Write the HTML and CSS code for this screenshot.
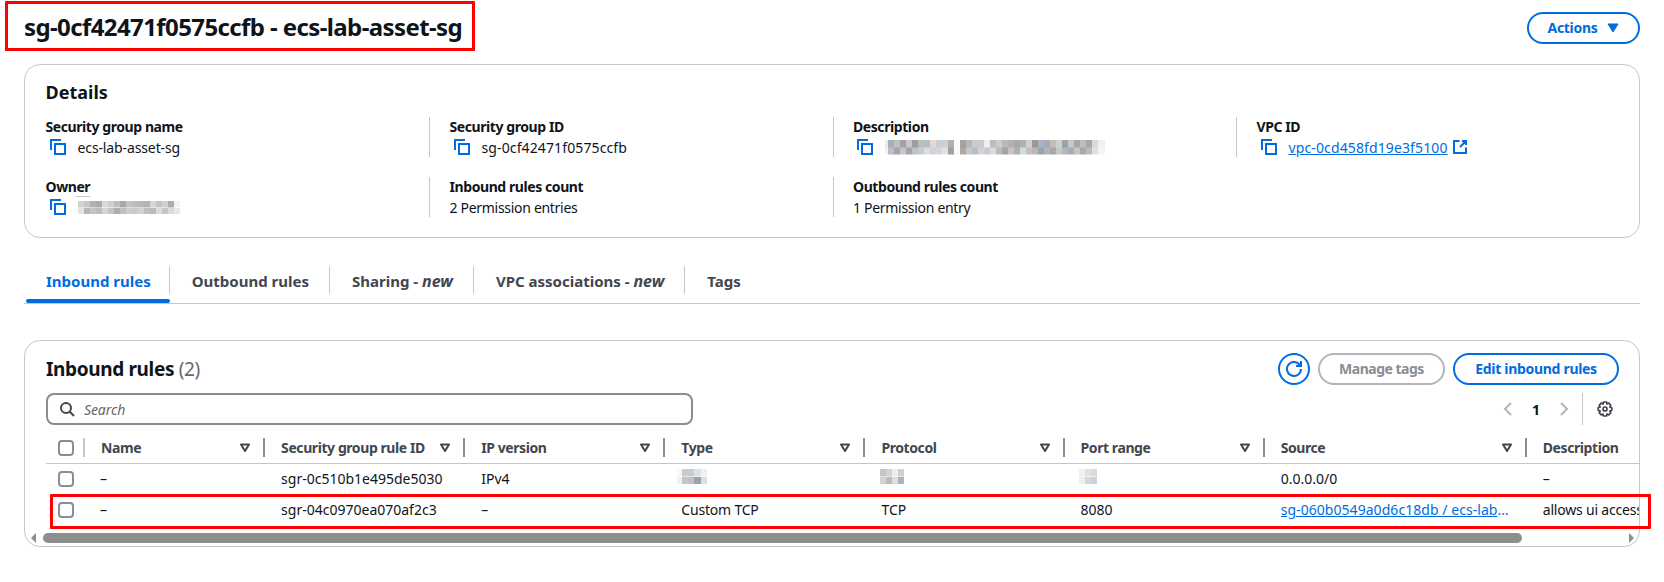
FILE: index.html
```html
<!DOCTYPE html>
<html lang="en">
<head>
<meta charset="utf-8">
<title>sg-0cf42471f0575ccfb - ecs-lab-asset-sg</title>
<link rel="stylesheet" href="styles.css">
</head>
<body>
<svg class="defs" width="0" height="0" aria-hidden="true">
  <symbol id="copy" viewBox="0 0 16 16"><path d="M1 11V1h10" fill="none" stroke="currentColor" stroke-width="2"/><rect x="5" y="5" width="10" height="10" fill="none" stroke="currentColor" stroke-width="2"/></symbol>
  <symbol id="sort" viewBox="0 0 12 10"><path d="M2 1.500h8L6 8z" fill="none" stroke="currentColor" stroke-width="2" stroke-linejoin="round"/></symbol>
</svg>
<main class="page">
  <header class="page-head">
    <h1 class="title">sg-0cf42471f0575ccfb - ecs-lab-asset-sg</h1>
    <button class="btn btn-actions">Actions<svg class="caret" viewBox="0 0 12 10" width="12" height="10"><path d="M1 1h10L6 9z" fill="currentColor" stroke="currentColor" stroke-linejoin="round"/></svg></button>
  </header>

  <section class="card details">
    <h2 class="details-title">Details</h2>
    <div class="details-grid">
      <div class="kv"><div class="k">Security group name</div><div class="v"><svg class="copy"><use href="#copy"/></svg>ecs-lab-asset-sg</div></div>
      <div class="kv sep"><div class="k">Security group ID</div><div class="v id"><svg class="copy"><use href="#copy"/></svg>sg-0cf42471f0575ccfb</div></div>
      <div class="kv sep"><div class="k">Description</div><div class="v"><svg class="copy"><use href="#copy"/></svg><span class="mosaic mosaic-desc"></span></div></div>
      <div class="kv sep"><div class="k">VPC ID</div><div class="v id"><svg class="copy"><use href="#copy"/></svg><a class="link" href="#">vpc-0cd458fd19e3f5100</a><svg class="ext" viewBox="0 0 16 16" width="16" height="16"><path d="M14 8.500V14H2V2h5.500M10 2h4v4M14 2 8 8" fill="none" stroke="currentColor" stroke-width="2"/></svg></div></div>
      <div class="kv"><div class="k">Own<span class="mark">er</span></div><div class="v"><svg class="copy"><use href="#copy"/></svg><span class="mosaic mosaic-owner"></span></div></div>
      <div class="kv sep"><div class="k">Inbound rules count</div><div class="v plain">2 Permission entries</div></div>
      <div class="kv sep"><div class="k">Outbound rules count</div><div class="v plain">1 Permission entry</div></div>
    </div>
  </section>

  <nav class="tabs">
    <a class="tab tab-first active" href="#">Inbound rules</a>
    <a class="tab" href="#">Outbound rules</a>
    <a class="tab" href="#">Sharing - <em>new</em></a>
    <a class="tab" href="#">VPC associations - <em>new</em></a>
    <a class="tab tab-last" href="#">Tags</a>
  </nav>

  <section class="card rules">
    <div class="rules-head">
      <h2 class="rules-title">Inbound rules <span class="count">(2)</span></h2>
      <div class="rules-actions">
        <button class="btn btn-icon" aria-label="Refresh"><svg viewBox="0 0 16 16" width="16" height="16"><path d="M10 5h5V0M15 8a7 7 0 1 1-.9-3.450" fill="none" stroke="currentColor" stroke-width="2"/></svg></button>
        <button class="btn btn-disabled">Manage tags</button>
        <button class="btn btn-edit">Edit inbound rules</button>
      </div>
    </div>
    <div class="filter-row">
      <div class="search">
        <svg viewBox="0 0 16 16" width="16" height="16"><circle cx="7" cy="7" r="5" fill="none" stroke="currentColor" stroke-width="2"/><path d="m15 15-4.500-4.500" fill="none" stroke="currentColor" stroke-width="2"/></svg>
        <span class="placeholder">Search</span>
      </div>
      <div class="pager">
        <svg class="chev" viewBox="0 0 16 16" width="16" height="16"><path d="M11 2 5 8l6 6" fill="none" stroke="currentColor" stroke-width="2"/></svg>
        <span class="page-num">1</span>
        <svg class="chev" viewBox="0 0 16 16" width="16" height="16"><path d="m5 2 6 6-6 6" fill="none" stroke="currentColor" stroke-width="2"/></svg>
        <span class="pager-div"><svg class="gear" viewBox="0 0 16 16" width="16" height="16"><path d="M6.500 1h3l.5 2 1.800-.9 2 2.200-1 1.700 2 .7v2.600l-2 .7 1 1.700-2 2.200-1.800-.9-.5 2h-3l-.5-2-1.800.9-2-2.200 1-1.700-2-.7V6.700l2-.7-1-1.700 2-2.200 1.800.9z" fill="none" stroke="currentColor" stroke-width="1.700" stroke-linejoin="round"/><circle cx="8" cy="8" r="2" fill="none" stroke="currentColor" stroke-width="1.700"/></svg></span>
      </div>
    </div>
    <div class="table-wrap">
      <table class="table">
        <colgroup><col class="c-sel"><col class="c-name"><col class="c-std"><col class="c-std"><col class="c-std"><col class="c-proto"><col class="c-std"><col class="c-src"><col class="c-std"></colgroup>
        <thead>
          <tr>
            <th><div class="th-in th-sel"><input class="check" type="checkbox"></div></th>
            <th><div class="th-in th-first">Name<svg class="sort"><use href="#sort"/></svg></div></th>
            <th><div class="th-in">Security group rule ID<svg class="sort"><use href="#sort"/></svg></div></th>
            <th><div class="th-in">IP version<svg class="sort"><use href="#sort"/></svg></div></th>
            <th><div class="th-in">Type<svg class="sort"><use href="#sort"/></svg></div></th>
            <th><div class="th-in">Protocol<svg class="sort"><use href="#sort"/></svg></div></th>
            <th><div class="th-in">Port range<svg class="sort"><use href="#sort"/></svg></div></th>
            <th><div class="th-in">Source<svg class="sort"><use href="#sort"/></svg></div></th>
            <th><div class="th-in th-end">Description</div></th>
          </tr>
        </thead>
        <tbody>
          <tr>
            <td class="td-sel"><input class="check" type="checkbox"></td>
            <td class="td-first">–</td>
            <td>sgr-0c510b1e495de5030</td>
            <td>IPv4</td>
            <td><span class="mosaic mosaic-type"></span></td>
            <td><span class="mosaic mosaic-proto"></span></td>
            <td><span class="mosaic mosaic-port"></span></td>
            <td>0.0.0.0/0</td>
            <td>–</td>
          </tr>
          <tr>
            <td class="td-sel"><input class="check" type="checkbox"></td>
            <td class="td-first">–</td>
            <td>sgr-04c0970ea070af2c3</td>
            <td>–</td>
            <td class="td-tight">Custom TCP</td>
            <td>TCP</td>
            <td>8080</td>
            <td class="td-src"><a class="link src-link" href="#">sg-060b0549a0d6c18db / ecs-lab-ui-sg</a></td>
            <td class="td-tight">allows ui access</td>
          </tr>
        </tbody>
      </table>
    </div>
    <div class="scrollbar">
      <span class="arrow arrow-left"></span>
      <span class="thumb"></span>
      <span class="arrow arrow-right"></span>
    </div>
  </section>
</main>
<div class="red-box red-title"></div>
<div class="red-box red-row"></div>
</body>
</html>
```

FILE: styles.css
```css
* { box-sizing: border-box; }
html, body { margin: 0; padding: 0; background: #fff; }
body {
  position: relative;
  width: 1664px;
  height: 582px;
  overflow: hidden;
  font-family: "Noto Sans", "Liberation Sans", sans-serif;
  font-size: 14px;
  color: #0f141a;
}
.defs { position: absolute; }
.page { padding: 0 24px; }

.page-head {
  display: flex;
  align-items: center;
  justify-content: space-between;
  height: 56px;
  margin-bottom: 8px;
}
.title { margin: 0 0 2px; font-size: 24px; line-height: 30px; font-weight: 700; letter-spacing: -0.6px; }

.btn {
  display: inline-flex;
  align-items: center;
  justify-content: center;
  height: 32px;
  border: 2px solid #006ce0;
  border-radius: 16px;
  background: #fff;
  color: #006ce0;
  font: 700 14px/20px "Noto Sans", sans-serif;
  letter-spacing: -0.3px;
  padding: 0;
}
.btn-actions { width: 113px; gap: 10px; }
.btn-icon { width: 32px; }
.btn-disabled { width: 127px; border-color: #b4b4bb; color: #8c8c94; letter-spacing: -0.5px; }
.btn-edit { width: 166px; }

.card { border: 1px solid #c6c6cd; border-radius: 16px; background: #fff; }
.details { height: 174px; padding: 15px 0 0 20.5px; }
.details-title { margin: 0; font-size: 18px; line-height: 24px; font-weight: 700; }
.details-grid {
  display: grid;
  grid-template-columns: 383.5px repeat(3, 403.5px);
  grid-auto-rows: 40px;
  row-gap: 20px;
  margin-top: 13px;
}
.kv.sep { border-left: 1px solid #c6c6cd; padding-left: 19.5px; }
.k { font-weight: 700; line-height: 20px; white-space: nowrap; letter-spacing: -0.42px; }
.mark { border-bottom: 1px solid #c6c6cd; }
.v { display: flex; align-items: center; height: 20px; white-space: nowrap; letter-spacing: -0.12px; }
.v.id { letter-spacing: 0.12px; }
.v.plain { letter-spacing: -0.3px; }
.copy { width: 16px; height: 16px; margin: 0 12px 0 4px; color: #006ce0; flex: none; }
.ext { margin-left: 4px; color: #006ce0; }
.link { color: #006ce0; text-decoration: underline; }

.mosaic { display: inline-block; background-repeat: no-repeat; background-size: 100% 50%; background-position: top, bottom; }
.mosaic-owner {
  width: 102px; height: 13px; margin-top: 1px;
  background-image:
    linear-gradient(90deg, #d8d0cc 0 6px, #c6c6ca 6px 12px, #b0afb2 12px 18px, #aaa9b0 18px 24px, #ddd9d9 24px 30px, #ccd2cd 30px 36px, #bbbfc5 36px 42px, #aaa8ae 42px 48px, #c0c3c0 48px 54px, #b9bdc0 54px 60px, #b6babf 60px 66px, #b2b3b5 66px 72px, #d6d5d5 72px 78px, #c2c4ca 78px 84px, #cfd0d2 84px 90px, #aeadae 90px 96px, #f0f3f6 96px 102px),
    linear-gradient(90deg, #e6e2df 0 6px, #b8b6b8 6px 12px, #c6c4c5 12px 18px, #bcbcc2 18px 24px, #d6d4d4 24px 30px, #c0c6c4 30px 36px, #aab0b6 36px 42px, #c2c0c4 42px 48px, #cccdcc 48px 54px, #c8cacd 54px 60px, #d0d3d6 60px 66px, #c0c0c2 66px 72px, #b8bcc0 72px 78px, #dcdde0 78px 84px, #c4c6c8 84px 90px, #dadada 90px 96px, #e4e8ec 96px 102px);
}
.mosaic-desc {
  width: 220px; height: 15px;
  background-image:
    linear-gradient(90deg, #eee9e4 0 3px, #a8aeb8 3px 9px, #bcc2c0 9px 15px, #a0a0b0 15px 21px, #c8c8c8 21px 27px, #a09c9c 27px 33px, #b8bfc0 33px 39px, #b4bcc4 39px 45px, #e4d8d2 45px 51px, #c8d0d4 51px 57px, #ccd0d8 57px 63px, #b0b0b0 63px 69px, #f8fbfc 69px 75px, #a8a09c 75px 81px, #b0b8c0 81px 87px, #ccccd0 87px 93px, #c8ccd0 93px 99px, #ecf0f2 99px 105px, #bcbcc0 105px 111px, #ccccd0 111px 117px, #bdb8b8 117px 123px, #b4b0b0 123px 129px, #aca8a8 129px 135px, #a8b4bc 135px 141px, #d0d0d0 141px 147px, #a09890 147px 153px, #a8b4c0 153px 159px, #a8a8b8 159px 165px, #c4bcb8 165px 171px, #d0d0cc 171px 177px, #94a4b0 177px 183px, #c8c8c8 183px 189px, #a8a4a8 189px 195px, #c0bcb8 195px 201px, #a8a4b4 201px 207px, #dadada 207px 213px, #eef0f2 213px 220px),
    linear-gradient(90deg, #f4f2f0 0 3px, #bcbec4 3px 9px, #a4a4ac 9px 15px, #c4c4cc 15px 21px, #a8a4a4 21px 27px, #bcc4c8 27px 33px, #c4ccd0 33px 39px, #e0dcd8 39px 45px, #ccd4d8 45px 51px, #d4d8dc 51px 57px, #dfe2e6 57px 63px, #a4a09c 63px 69px, #fafbfc 69px 75px, #b0a8a4 75px 81px, #c4c8cc 81px 87px, #bcbcc0 87px 93px, #d4d4d8 93px 99px, #c8ccd0 99px 105px, #dcdcdc 105px 111px, #bcbcbc 111px 117px, #a8a4a4 117px 123px, #c4c4c4 123px 129px, #b0b0b0 129px 135px, #d4dce0 135px 141px, #c0c0c0 141px 147px, #b8b8b8 147px 153px, #98a4ac 153px 159px, #b0b4b8 159px 165px, #a8a8a8 165px 171px, #c8c8c4 171px 177px, #b4b8bc 177px 183px, #a8acb4 183px 189px, #c4c4c4 189px 195px, #a8a8a8 195px 201px, #bcbcc0 201px 207px, #e0e0e0 207px 213px, #f2f4f6 213px 220px);
}
.mosaic-type, .mosaic-proto, .mosaic-port { height: 15px; display: block; margin-top: -4px; }
.mosaic-type {
  width: 30px; margin-left: -4px;
  background-image:
    linear-gradient(90deg, #f6f6f6 0 5px, #c8ccd0 5px 17px, #dde2e6 17px 24px, #eef0f2 24px 30px),
    linear-gradient(90deg, #f0f0f0 0 5px, #c4c4c8 5px 11px, #c8c0bc 11px 17px, #94a4b0 17px 24px, #dcdfe2 24px 30px);
}
.mosaic-proto {
  width: 24px; margin-left: -1px;
  background-image:
    linear-gradient(90deg, #c4c6ca 0 6px, #d0d2d4 6px 12px, #eceeee 12px 18px, #cdd2d8 18px 24px),
    linear-gradient(90deg, #d0d2d6 0 6px, #b8bcc0 6px 12px, #e8dccf 12px 18px, #a4b4c4 18px 24px);
}
.mosaic-port {
  width: 18px; margin-left: -2px;
  background-image:
    linear-gradient(90deg, #f0f0f0 0 6px, #e2e2e4 6px 12px, #d8dadf 12px 18px),
    linear-gradient(90deg, #eeeeee 0 6px, #d4d6da 6px 12px, #cfd1d8 12px 18px);
}

.tabs {
  display: flex;
  height: 45px;
  margin-top: 21px;
  margin-bottom: 36px;
  border-bottom: 1px solid #c6c6cd;
}
.tab {
  position: relative;
  display: flex;
  align-items: center;
  height: 44px;
  padding: 0 21px 0 22px;
  color: #424650;
  font-size: 15px;
  font-weight: 700;
  text-decoration: none;
  white-space: pre;
}
.tab em { font-style: italic; font-size: 16px; }
.tab::after {
  content: "";
  position: absolute;
  right: 0;
  top: 7px;
  height: 28px;
  width: 1px;
  background: #c6c6cd;
}
.tab-last::after { display: none; }
.tab-first { margin-left: 2px; padding: 0 19px 0 20px; }
.tab.active { color: #006ce0; }
.tab.active::before {
  content: "";
  position: absolute;
  left: 0;
  right: 0;
  bottom: 0;
  height: 4px;
  border-radius: 2px;
  background: #006ce0;
}

.rules { height: 207px; padding: 11px 0 0 21px; overflow: hidden; }
.rules-head { display: flex; justify-content: space-between; align-items: center; padding-right: 20px; height: 34px; }
.rules-title { margin: 0; font-size: 19px; line-height: 28px; font-weight: 700; letter-spacing: -0.35px; }
.count { font-weight: 400; color: #656871; }
.rules-actions { display: flex; gap: 8px; }
.filter-row { display: flex; justify-content: space-between; margin-top: 7px; height: 32px; padding-right: 26px; }
.search {
  display: flex;
  align-items: center;
  gap: 9px;
  width: 647px;
  height: 32px;
  padding-left: 11px;
  border: 2px solid #8c8c94;
  border-radius: 8px;
  color: #424650;
}
.placeholder { font-size: 14px; font-style: italic; color: #656871; letter-spacing: -0.1px; }
.pager { display: flex; align-items: center; color: #b4b4bb; }
.page-num { width: 40px; text-align: center; font-weight: 700; color: #0f141a; }
.pager-div { display: flex; align-items: center; height: 32px; margin-left: 10px; padding-left: 14px; border-left: 1px solid #c6c6cd; color: #424650; }
.gear { display: block; }

.table-wrap { width: 1593px; overflow: hidden; margin-top: 8px; }
.table { width: 1681px; table-layout: fixed; border-collapse: collapse; }
.c-sel { width: 39px; }
.c-name { width: 180px; }
.c-std { width: 200px; }
.c-proto { width: 199px; }
.c-src { width: 262px; }
th { height: 30px; padding: 0; border-bottom: 1px solid #c6c6cd; font-weight: 700; color: #424650; text-align: left; letter-spacing: -0.42px; }
.th-in {
  display: flex;
  align-items: center;
  justify-content: space-between;
  height: 19px;
  padding: 0 12px 0 16px;
  border-right: 2px solid #8c8c94;
  white-space: nowrap;
}
.th-first { padding-left: 16px; }
.th-sel { padding: 0 0 0 12px; border-right-color: #c6c6cd; justify-content: flex-start; }
.th-end { border-right: 0; }
.sort { width: 12px; height: 10px; color: #424650; flex: none; }
td { height: 31px; padding: 0 0 0 16px; white-space: nowrap; overflow: hidden; }
.td-sel { padding-left: 12px; }
.td-first { padding-left: 15px; }
.td-src { padding-right: 16px; }
.td-tight { letter-spacing: -0.2px; }
.src-link { display: block; overflow: hidden; text-overflow: ellipsis; letter-spacing: 0.05px; }
.check {
  display: block;
  appearance: none;
  width: 16px;
  height: 16px;
  margin: 0;
  border: 2px solid #8c8c94;
  border-radius: 4px;
  background: #fff;
}

.scrollbar { display: flex; align-items: center; height: 10px; margin: 8px 0 0 -15px; width: 1603px; }
.arrow { width: 0; height: 0; border-top: 5px solid transparent; border-bottom: 5px solid transparent; flex: none; }
.arrow-left { border-right: 5px solid #8e8e8e; margin-right: 7px; }
.arrow-right { border-left: 5px solid #8e8e8e; margin-left: auto; }
.thumb { width: 1479px; height: 10px; border-radius: 5px; background: #8e8e8e; }

.red-box { position: absolute; border: 3px solid #f00; border-radius: 1px; pointer-events: none; }
.red-title { left: 5px; top: 1px; width: 470px; height: 50px; }
.red-row { left: 50px; top: 494px; width: 1601px; height: 35px; }
```
